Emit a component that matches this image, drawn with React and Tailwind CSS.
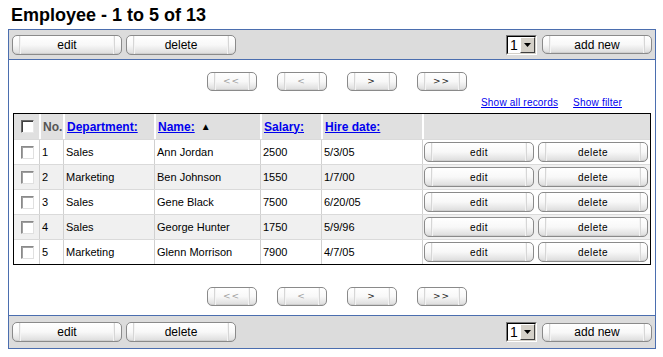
import React from "react";

function Btn({ children, className = "", textClass = "" }) {
  return (
    <div
      className={`flex rounded-[5px] border border-[#8a8a8a] bg-linear-to-b from-white via-[#f8f8f8] to-[#dcdcdc] shadow-[inset_0_1px_0_#ffffff,inset_0_-1px_0_#cfcfcf] ${className}`}
    >
      <span className="w-[7px] border-r border-[#d6d6d6]" />
      <span className={`flex flex-1 items-center justify-center border-x border-[#f4f4f4] ${textClass}`}>
        {children}
      </span>
      <span className="w-[7px] border-l border-[#d6d6d6]" />
    </div>
  );
}

function Select() {
  return (
    <div className="flex h-[20px] w-[31px] border border-t-[#7a7a7a] border-l-[#7a7a7a] border-b-white border-r-white">
      <div className="flex flex-1 border border-t-black border-l-black border-b-[#d4d0c8] border-r-[#d4d0c8] bg-white">
        <span className="flex-1 pl-[2px] text-[14px] leading-[16px] text-black">1</span>
        <span className="flex w-[15px] items-center justify-center border border-t-white border-l-white border-b-[#404040] border-r-[#404040] bg-[#d4d0c8]">
          <svg width="7" height="4" viewBox="0 0 7 4">
            <path d="M0 0H7L3.5 4Z" fill="#000" />
          </svg>
        </span>
      </div>
    </div>
  );
}

function Toolbar({ className = "" }) {
  return (
    <div className={`flex items-center justify-between bg-[#dcdcdc] px-[3px] ${className}`}>
      <div className="flex gap-[4px]">
        <Btn className="h-[20px] w-[110px]" textClass="text-[12px] text-black">edit</Btn>
        <Btn className="h-[20px] w-[110px]" textClass="text-[12px] text-black">delete</Btn>
      </div>
      <div className="flex items-center gap-[5px]">
        <Select />
        <Btn className="h-[19px] w-[110px]" textClass="text-[12px] text-black">add new</Btn>
      </div>
    </div>
  );
}

function Pager({ className = "" }) {
  const items = [
    ["<<", "text-[#a0a0a0]"],
    ["<", "text-[#a0a0a0]"],
    [">", "text-[#222222]"],
    [">>", "text-[#222222]"],
  ];
  return (
    <div className={`flex justify-center gap-[20px] pl-[9px] ${className}`}>
      {items.map(([t, c]) => (
        <Btn key={t} className="h-[19px] w-[50px]" textClass={`text-[9px] tracking-[1px] font-['DejaVu_Sans',sans-serif] ${c}`}>
          {t}
        </Btn>
      ))}
    </div>
  );
}

function Check({ dark }) {
  return (
    <span
      className={`block h-[13px] w-[13px] border bg-white ${
        dark
          ? "border-t-[#6a6a6a] border-l-[#6a6a6a] border-b-[#e8e8e8] border-r-[#e8e8e8] shadow-[inset_1px_1px_0_#404040]"
          : "border-t-[#8a8a8a] border-l-[#8a8a8a] border-b-[#e0e0e0] border-r-[#e0e0e0] shadow-[inset_1px_1px_0_#a0a0a0]"
      }`}
    />
  );
}

const rows = [
  ["1", "Sales", "Ann Jordan", "2500", "5/3/05"],
  ["2", "Marketing", "Ben Johnson", "1550", "1/7/00"],
  ["3", "Sales", "Gene Black", "7500", "6/20/05"],
  ["4", "Sales", "George Hunter", "1750", "5/9/96"],
  ["5", "Marketing", "Glenn Morrison", "7900", "4/7/05"],
];

const grid = "grid grid-cols-[25px_24px_91px_106px_61px_101px_228px]";

export default function App() {
  return (
    <div className="h-[357px] w-[663px] bg-white font-['Liberation_Sans',Arial,sans-serif] text-black">
      <div className="pl-[11px] pt-[4px] text-[18px] font-bold leading-[22px]">Employee - 1 to 5 of 13</div>
      <div className="ml-[8px] mt-[3px] w-[648px] border border-[#4b6eaf]">
        <Toolbar className="h-[29px]" />
        <div className="border-y border-[#4b6eaf] bg-white px-[4px] pb-[9px] pt-[12px]">
          <Pager />
          <div className="mt-[5px] flex h-[13px] justify-end gap-[15px] pr-[29px] text-[10px] leading-[13px] tracking-[0.2px] text-[#0000ee]">
            <span className="underline">Show all records</span>
            <span className="underline">Show filter</span>
          </div>
          <div className="mt-[4px] w-[638px] border border-black">
            <div className={`${grid} h-[25px] bg-[#e0e0e0] text-[12px] font-bold`}>
              <div className="flex items-center pl-[7px]">
                <Check dark />
              </div>
              <div className="flex items-center border-l-2 border-white pl-[2px] text-[#555555]">No.</div>
              <div className="flex items-center border-l-2 border-white pl-[2px] text-[#0000ee] underline">Department:</div>
              <div className="flex items-center border-l-2 border-white pl-[2px]">
                <span className="text-[#0000ee] underline">Name:</span>
                <span className="ml-[6px] text-[10px]">▲</span>
              </div>
              <div className="flex items-center border-l-2 border-white pl-[2px] text-[#0000ee] underline">Salary:</div>
              <div className="flex items-center border-l-2 border-white pl-[2px] text-[#0000ee] underline">Hire date:</div>
              <div className="border-l-2 border-white" />
            </div>
            {rows.map((r, i) => (
              <div
                key={r[0]}
                className={`${grid} h-[25px] border-t border-[#dadada] text-[11px] ${i % 2 ? "bg-[#f0f0f0]" : "bg-white"}`}
              >
                <div className="flex items-center pl-[7px]">
                  <Check />
                </div>
                {r.map((c, j) => (
                  <div key={j} className="flex items-center border-l border-[#d0d0d0] pl-[2px]">
                    {c}
                  </div>
                ))}
                <div className="flex items-center gap-[4px] border-l border-[#d0d0d0] pl-[1px]">
                  <Btn className="h-[20px] w-[110px]" textClass="text-[10px] tracking-[0.5px]">edit</Btn>
                  <Btn className="h-[20px] w-[110px]" textClass="text-[10px] tracking-[0.5px]">delete</Btn>
                </div>
              </div>
            ))}
          </div>
          <Pager className="mt-[22px]" />
        </div>
        <Toolbar className="h-[32px]" />
      </div>
    </div>
  );
}
